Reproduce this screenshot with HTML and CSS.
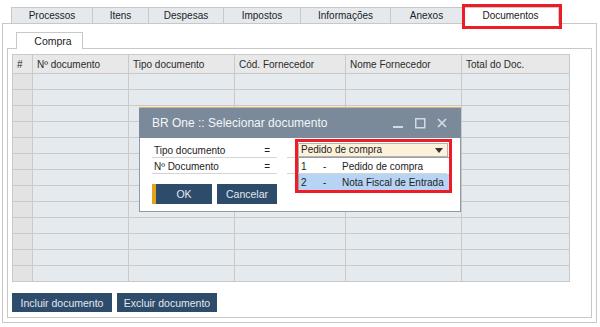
FILE: index.html
```html
<!DOCTYPE html>
<html lang="pt">
<head>
    <meta charset="UTF-8">
    <title>Documentos</title>
    <link rel="stylesheet" href="styles.css">
</head>
<body>
    <div class="page">
        <div class="tabs">
            <div class="tab">Processos</div>
            <div class="tab">Itens</div>
            <div class="tab">Despesas</div>
            <div class="tab">Impostos</div>
            <div class="tab">Informações</div>
            <div class="tab">Anexos</div>
            <div class="tab active">Documentos<span class="mark"></span></div>
        </div>

        <div class="frame">
            <div class="subtabs">
                <div class="subtab">Compra</div>
            </div>
            <div class="panel">
                <table class="grid">
                    <colgroup>
                        <col class="c-num">
                        <col class="c-doc">
                        <col class="c-tipo">
                        <col class="c-cod">
                        <col class="c-nome">
                        <col class="c-total">
                    </colgroup>
                    <thead>
                        <tr>
                            <th>#</th>
                            <th>Nº documento</th>
                            <th>Tipo documento</th>
                            <th>Cód. Fornecedor</th>
                            <th>Nome Fornecedor</th>
                            <th>Total do Doc.</th>
                        </tr>
                    </thead>
                    <tbody>
                        <tr><td></td><td></td><td></td><td></td><td></td><td></td></tr>
                        <tr><td></td><td></td><td></td><td></td><td></td><td></td></tr>
                        <tr><td></td><td></td><td></td><td></td><td></td><td></td></tr>
                        <tr><td></td><td></td><td></td><td></td><td></td><td></td></tr>
                        <tr><td></td><td></td><td></td><td></td><td></td><td></td></tr>
                        <tr><td></td><td></td><td></td><td></td><td></td><td></td></tr>
                        <tr><td></td><td></td><td></td><td></td><td></td><td></td></tr>
                        <tr><td></td><td></td><td></td><td></td><td></td><td></td></tr>
                        <tr><td></td><td></td><td></td><td></td><td></td><td></td></tr>
                        <tr><td></td><td></td><td></td><td></td><td></td><td></td></tr>
                        <tr><td></td><td></td><td></td><td></td><td></td><td></td></tr>
                        <tr><td></td><td></td><td></td><td></td><td></td><td></td></tr>
                        <tr><td></td><td></td><td></td><td></td><td></td><td></td></tr>
                    </tbody>
                </table>
                <div class="actions">
                    <button class="btn">Incluir documento</button>
                    <button class="btn">Excluir documento</button>
                </div>
            </div>
        </div>

        <!-- janela de seleção -->
        <div class="dialog">
            <div class="dlg-title">
                <span>BR One :: Selecionar documento</span>
                <svg class="win-ctrl" width="54" height="12" viewBox="0 0 54 12">
                    <line x1="0" y1="10" x2="10" y2="10" stroke="#d3dae1" stroke-width="2"/>
                    <rect x="22.75" y="1.75" width="9" height="9" fill="none" stroke="#d3dae1" stroke-width="1.5"/>
                    <line x1="45" y1="2" x2="53" y2="10" stroke="#d3dae1" stroke-width="1.7"/>
                    <line x1="53" y1="2" x2="45" y2="10" stroke="#d3dae1" stroke-width="1.7"/>
                </svg>
            </div>
            <div class="dlg-body">
                <div class="field-row">
                    <div class="label"><span>Tipo documento</span><span>=</span></div>
                    <div class="value">
                        <div class="combo">
                            Pedido de compra
                            <span class="arrow"></span>
                            <div class="dropdown">
                                <div class="opt"><span class="n">1</span><span class="d">-</span>Pedido de compra</div>
                                <div class="opt selected"><span class="n">2</span><span class="d">-</span>Nota Fiscal de Entrada</div>
                            </div>
                        </div>
                    </div>
                </div>
                <div class="field-row">
                    <div class="label"><span>Nº Documento</span><span>=</span></div>
                    <div class="value"></div>
                </div>
                <div class="dlg-actions">
                    <button class="btn btn-ok">OK</button>
                    <button class="btn btn-small">Cancelar</button>
                </div>
            </div>
            <span class="mark mark-combo"></span>
        </div>
    </div>
</body>
</html>
```

FILE: styles.css
```css
body {
    margin: 0;
    font-family: "Liberation Sans", Arial, sans-serif;
    font-size: 10px;
    color: #222;
    background: #fff;
}

.page {
    position: relative;
    width: 600px;
    height: 327px;
    overflow: hidden;
}

/* abas superiores */
.tabs {
    display: flex;
    align-items: flex-start;
    padding: 7px 0 0 11px;
    height: 16px;
}

.tab {
    position: relative;
    box-sizing: border-box;
    height: 16px;
    border: 1px solid #c8c8c8;
    border-right: none;
    border-bottom: none;
    background: #e5e9ee;
    text-align: center;
    line-height: 15px;
}

.tab:nth-child(1) { width: 81px; }
.tab:nth-child(2) { width: 56px; }
.tab:nth-child(3) { width: 75px; }
.tab:nth-child(4) { width: 77px; }
.tab:nth-child(5) { width: 90px; }
.tab:nth-child(6) { width: 72px; }
.tab:nth-child(7) { width: 97px; }

.tab.active {
    height: 17px;
    background: #fff;
    border-right: 1px solid #c8c8c8;
    z-index: 2;
}

.mark {
    position: absolute;
    border: 3px solid #ee1c25;
    pointer-events: none;
}

.tab .mark {
    left: -1px;
    top: -4px;
    right: -4px;
    bottom: -5px;
}

.frame {
    box-sizing: border-box;
    margin-left: 2px;
    width: 595px;
    height: 300px;
    border: 1px solid #c8c8c8;
    padding: 8px 4px 4px 4px;
}

.subtabs {
    display: flex;
    padding-left: 9px;
    height: 16px;
}

.subtab {
    position: relative;
    z-index: 1;
    box-sizing: border-box;
    width: 67px;
    height: 17px;
    border: 1px solid #c8c8c8;
    border-bottom: none;
    background: #fff;
    padding-left: 7px;
    text-align: center;
    line-height: 16px;
    font-size: 10.5px;
}

.panel {
    box-sizing: border-box;
    height: 270px;
    border: 1px solid #c8c8c8;
    padding: 5px 4px;
}

/* grade */
.grid {
    border-collapse: collapse;
    table-layout: fixed;
    width: 557px;
}

.c-num { width: 20px; }
.c-doc { width: 96px; }
.c-tipo { width: 106px; }
.c-cod { width: 111px; }
.c-nome { width: 116px; }
.c-total { width: 108px; }

.grid th, .grid td {
    border: 1px solid #c9c9c9;
    padding: 0 0 0 4px;
}

.grid th {
    height: 18px;
    background: #e8e8e8;
    font-weight: normal;
    text-align: left;
    color: #2a2a2a;
}

.grid td {
    height: 15px;
    background: #e5eaef;
}

.grid td:first-child {
    background: #e3e3e3;
}

.actions {
    display: flex;
    gap: 5px;
    margin-top: 11px;
}

.btn {
    box-sizing: border-box;
    width: 100px;
    height: 19px;
    border: none;
    padding: 0;
    background: #2d4b6b;
    color: #e2e8ef;
    font-family: inherit;
    font-size: 10.5px;
}

/* dialogo */
.dialog {
    position: absolute;
    left: 139px;
    top: 107px;
    width: 322px;
    border-top: 1px solid #d9b56c;
    background: #fff;
    z-index: 5;
}

.dlg-title {
    display: flex;
    align-items: center;
    justify-content: space-between;
    height: 30px;
    padding: 0 14px 0 13px;
    background: #7b8a9a;
    color: #f3f5f7;
    font-size: 12px;
}

.win-ctrl {
    display: block;
}

.dlg-body {
    box-sizing: border-box;
    height: 74px;
    border: 1px solid #8e9aa6;
    border-top: none;
    padding: 4px 0 0 12px;
}

.field-row {
    display: grid;
    grid-template-columns: 125px 160px;
    column-gap: 10px;
}

.label {
    display: flex;
    justify-content: space-between;
    box-sizing: border-box;
    height: 16px;
    padding: 1px 7px 0 2px;
    border-bottom: 1px solid #d4d4d4;
    line-height: 15px;
}

.value {
    position: relative;
    box-sizing: border-box;
    height: 16px;
    border-bottom: 1px solid #d4d4d4;
}

.combo {
    position: relative;
    box-sizing: border-box;
    margin: 1px 0 0 11px;
    width: 150px;
    height: 14px;
    border: 1px solid #b4b4b4;
    background: #fcf2db;
    padding-left: 2px;
    line-height: 12px;
}

.arrow {
    position: absolute;
    right: 4px;
    top: 4px;
    border-left: 4px solid transparent;
    border-right: 4px solid transparent;
    border-top: 5px solid #333;
}

.dropdown {
    position: absolute;
    left: -1px;
    top: 13px;
    width: 150px;
    border: 1px solid #9e9e9e;
    background: #fff;
}

.opt {
    display: flex;
    height: 16px;
    line-height: 17px;
    padding-left: 2px;
}

.opt.selected {
    background: #b7d4f4;
}

.opt .n { width: 22px; }
.opt .d { width: 19px; }

.dlg-actions {
    display: flex;
    gap: 5px;
    margin-top: 10px;
}

.btn-small {
    width: 60px;
    height: 20px;
}

.btn-ok {
    width: 60px;
    height: 20px;
    border-left: 4px solid #e4a31d;
}

.mark-combo {
    left: 156px;
    top: 31px;
    width: 157px;
    height: 54px;
    box-sizing: border-box;
}
```
